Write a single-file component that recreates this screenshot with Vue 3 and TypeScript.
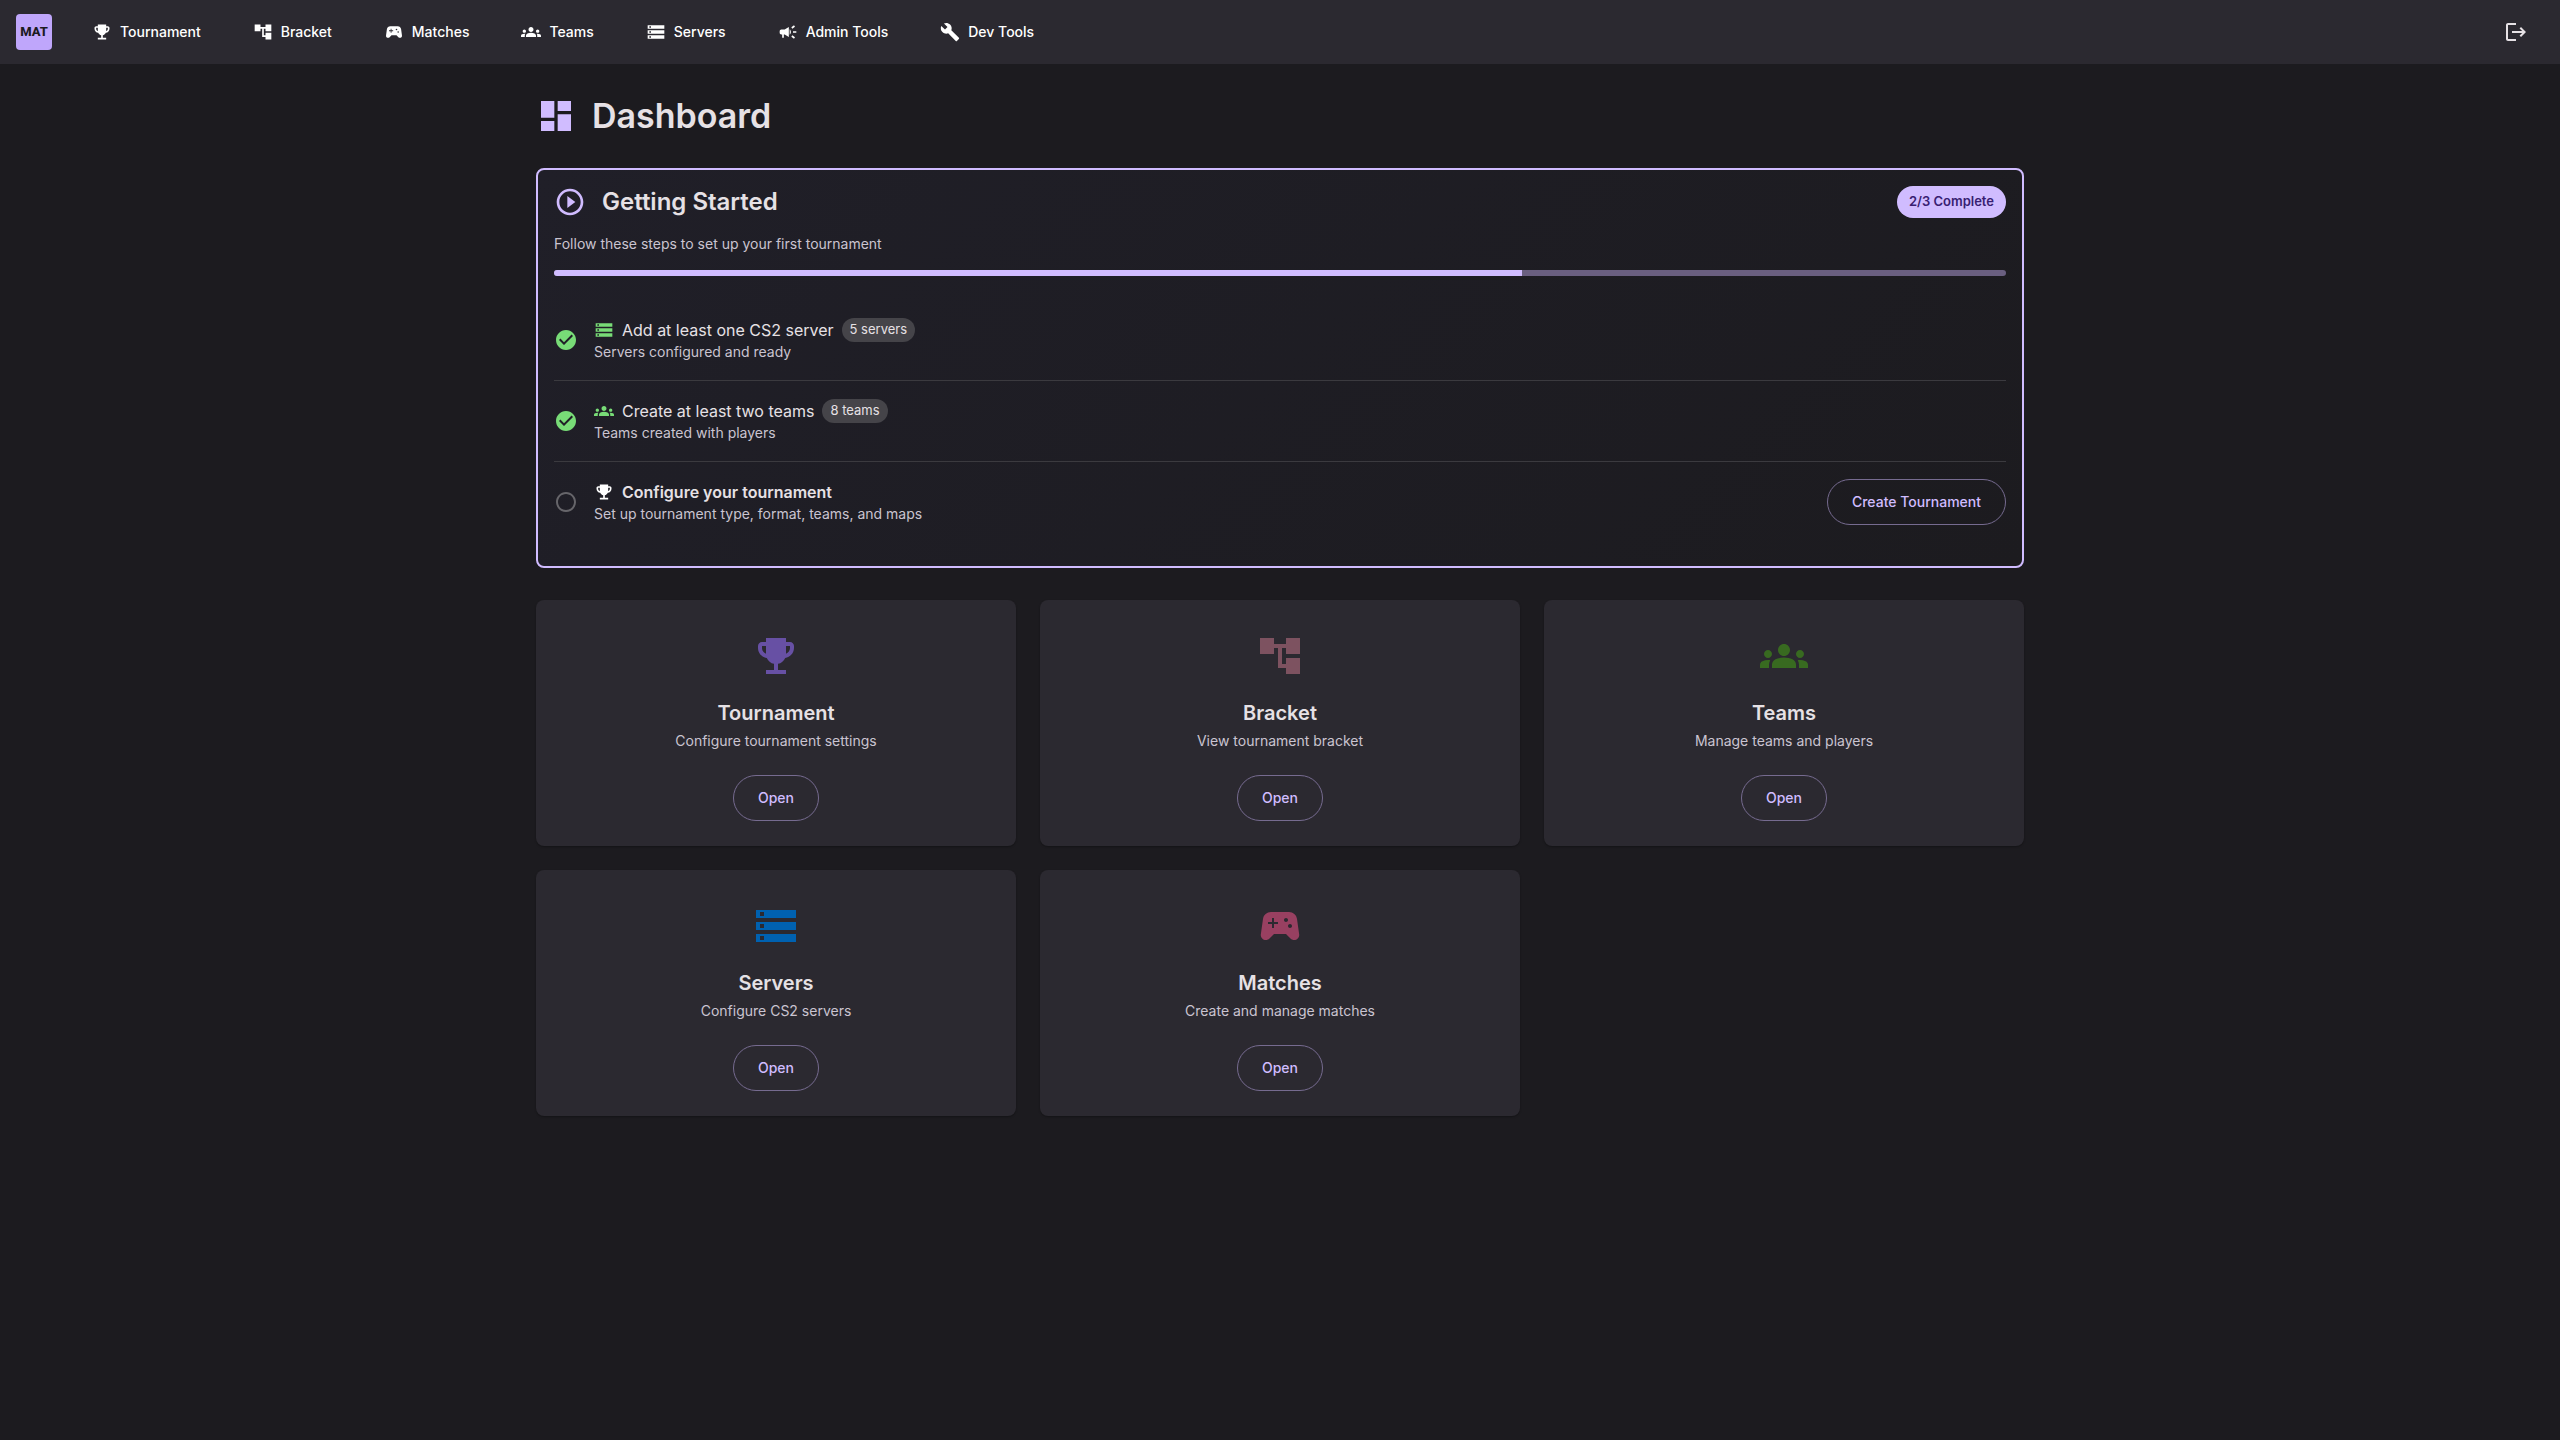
<script setup lang="ts">
interface NavItem {
  label: string
  icon: string
}

interface Step {
  title: string
  detail: string
  icon: string
  done: boolean
  count?: string
  action?: string
}

interface Tile {
  title: string
  detail: string
  icon: string
  color: string
}

const icons: Record<string, string> = {
  trophy:
    'M19 5h-2V3H7v2H5c-1.1 0-2 .9-2 2v1c0 2.55 1.92 4.63 4.39 4.94.63 1.5 1.98 2.63 3.61 2.96V19H7v2h10v-2h-4v-3.1c1.63-.33 2.98-1.46 3.61-2.96C19.08 12.63 21 10.55 21 8V7c0-1.1-.9-2-2-2M5 8V7h2v3.82C5.84 10.4 5 9.3 5 8m14 0c0 1.3-.84 2.4-2 2.82V7h2z',
  bracket: 'M22 11V3h-7v3H9V3H2v8h7V8h2v10h4v3h7v-8h-7v3h-2V8h2v3z',
  gamepad:
    'm21.58 16.09-1.09-7.66C20.21 6.46 18.52 5 16.53 5H7.47C5.48 5 3.79 6.46 3.51 8.43l-1.09 7.66C2.2 17.63 3.39 19 4.94 19c.68 0 1.32-.27 1.8-.75L9 16h6l2.25 2.25c.48.48 1.13.75 1.8.75 1.56 0 2.75-1.37 2.53-2.91M11 11H9v2H8v-2H6v-1h2V8h1v2h2zm4-1c-.55 0-1-.45-1-1s.45-1 1-1 1 .45 1 1-.45 1-1 1m2 3c-.55 0-1-.45-1-1s.45-1 1-1 1 .45 1 1-.45 1-1 1',
  groups:
    'M12 12.75c1.63 0 3.07.39 4.24.9 1.08.48 1.76 1.56 1.76 2.73V18H6v-1.61c0-1.18.68-2.26 1.76-2.73 1.17-.52 2.61-.91 4.24-.91M4 13c1.1 0 2-.9 2-2s-.9-2-2-2-2 .9-2 2 .9 2 2 2m1.13 1.1c-.37-.06-.74-.1-1.13-.1-.99 0-1.93.21-2.78.58C.48 14.9 0 15.62 0 16.43V18h4.5v-1.61c0-.83.23-1.61.63-2.29M20 13c1.1 0 2-.9 2-2s-.9-2-2-2-2 .9-2 2 .9 2 2 2m4 3.43c0-.81-.48-1.53-1.22-1.85-.85-.37-1.79-.58-2.78-.58-.39 0-.76.04-1.13.1.4.68.63 1.46.63 2.29V18H24zM12 6c1.66 0 3 1.34 3 3s-1.34 3-3 3-3-1.34-3-3 1.34-3 3-3',
  storage:
    'M2 20h20v-4H2zm2-3h2v2H4zM2 4v4h20V4zm4 3H4V5h2zm-4 7h20v-4H2zm2-3h2v2H4z',
  campaign:
    'M18 11v2h4v-2zm-2 6.61c.96.71 2.21 1.65 3.2 2.39.4-.53.8-1.07 1.2-1.6-.99-.74-2.24-1.68-3.2-2.4-.4.54-.8 1.08-1.2 1.61M20.4 5.6c-.4-.53-.8-1.07-1.2-1.6-.99.74-2.24 1.68-3.2 2.4.4.53.8 1.07 1.2 1.6.96-.72 2.21-1.65 3.2-2.4M4 9c-1.1 0-2 .9-2 2v2c0 1.1.9 2 2 2h1v4h2v-4h1l5 3V6L8 9zm11.5 3c0-1.33-.58-2.53-1.5-3.35v6.69c.92-.81 1.5-2.01 1.5-3.34',
  wrench:
    'm22.7 19-9.1-9.1c.9-2.3.4-5-1.5-6.9-2-2-5-2.4-7.4-1.3L9 6 6 9 1.6 4.7C.4 7.1.9 10.1 2.9 12.1c1.9 1.9 4.6 2.4 6.9 1.5l9.1 9.1c.4.4 1 .4 1.4 0l2.3-2.3c.5-.4.5-1.1.1-1.4',
  logout:
    'm17 7-1.41 1.41L18.17 11H8v2h10.17l-2.58 2.58L17 17l5-5zM4 5h8V3H4c-1.1 0-2 .9-2 2v14c0 1.1.9 2 2 2h8v-2H4z',
  dashboard: 'M3 13h8V3H3zm0 8h8v-6H3zm10 0h8V11h-8zm0-18v6h8V3z',
  play: 'm10 16.5 6-4.5-6-4.5zM12 2C6.48 2 2 6.48 2 12s4.48 10 10 10 10-4.48 10-10S17.52 2 12 2m0 18c-4.41 0-8-3.59-8-8s3.59-8 8-8 8 3.59 8 8-3.59 8-8 8',
  check:
    'M12 2C6.48 2 2 6.48 2 12s4.48 10 10 10 10-4.48 10-10S17.52 2 12 2m-2 15-5-5 1.41-1.41L10 14.17l7.59-7.59L19 8z',
  circle:
    'M12 2C6.48 2 2 6.48 2 12s4.48 10 10 10 10-4.48 10-10S17.52 2 12 2m0 18c-4.42 0-8-3.58-8-8s3.58-8 8-8 8 3.58 8 8-3.58 8-8 8',
}

const navItems: NavItem[] = [
  { label: 'Tournament', icon: 'trophy' },
  { label: 'Bracket', icon: 'bracket' },
  { label: 'Matches', icon: 'gamepad' },
  { label: 'Teams', icon: 'groups' },
  { label: 'Servers', icon: 'storage' },
  { label: 'Admin Tools', icon: 'campaign' },
  { label: 'Dev Tools', icon: 'wrench' },
]

const steps: Step[] = [
  {
    title: 'Add at least one CS2 server',
    detail: 'Servers configured and ready',
    icon: 'storage',
    done: true,
    count: '5 servers',
  },
  {
    title: 'Create at least two teams',
    detail: 'Teams created with players',
    icon: 'groups',
    done: true,
    count: '8 teams',
  },
  {
    title: 'Configure your tournament',
    detail: 'Set up tournament type, format, teams, and maps',
    icon: 'trophy',
    done: false,
    action: 'Create Tournament',
  },
]

const tiles: Tile[] = [
  { title: 'Tournament', detail: 'Configure tournament settings', icon: 'trophy', color: '#6750a4' },
  { title: 'Bracket', detail: 'View tournament bracket', icon: 'bracket', color: '#7d5260' },
  { title: 'Teams', detail: 'Manage teams and players', icon: 'groups', color: '#386a20' },
  { title: 'Servers', detail: 'Configure CS2 servers', icon: 'storage', color: '#0061b0' },
  { title: 'Matches', detail: 'Create and manage matches', icon: 'gamepad', color: '#984061' },
]

const completed = steps.filter((s) => s.done).length
</script>

<template>
  <header class="app-bar">
    <a class="logo" href="#" aria-label="Home">MAT</a>
    <nav class="nav">
      <a v-for="item in navItems" :key="item.label" class="nav-link" href="#">
        <svg class="icon-20" viewBox="0 0 24 24" aria-hidden="true"><path :d="icons[item.icon]" /></svg>
        {{ item.label }}
      </a>
    </nav>
    <button class="logout" type="button" aria-label="Sign out">
      <svg class="icon-24" viewBox="0 0 24 24" aria-hidden="true"><path :d="icons.logout" /></svg>
    </button>
  </header>

  <main class="container">
    <div class="page-title">
      <svg class="icon-40" viewBox="0 0 24 24" aria-hidden="true"><path :d="icons.dashboard" /></svg>
      <h1>Dashboard</h1>
    </div>

    <section class="started">
      <div class="started-head">
        <svg class="icon-32" viewBox="0 0 24 24" aria-hidden="true"><path :d="icons.play" /></svg>
        <h2>Getting Started</h2>
        <span class="status">{{ completed }}/{{ steps.length }} Complete</span>
      </div>
      <p class="intro">Follow these steps to set up your first tournament</p>
      <progress class="progress" :value="completed" :max="steps.length" aria-label="Setup progress"></progress>
      <ul class="steps">
        <li v-for="step in steps" :key="step.title" class="step">
          <svg class="icon-24" :class="step.done ? 'done' : 'pending'" viewBox="0 0 24 24" aria-hidden="true">
            <path :d="step.done ? icons.check : icons.circle" />
          </svg>
          <div class="step-body">
            <div class="step-title">
              <svg class="icon-20" :class="{ done: step.done }" viewBox="0 0 24 24" aria-hidden="true">
                <path :d="icons[step.icon]" />
              </svg>
              <span :class="{ current: !step.done }">{{ step.title }}</span>
              <span v-if="step.count" class="count">{{ step.count }}</span>
            </div>
            <p class="step-detail">{{ step.detail }}</p>
          </div>
          <button v-if="step.action" class="outlined" type="button">{{ step.action }}</button>
        </li>
      </ul>
    </section>

    <div class="tiles">
      <article v-for="tile in tiles" :key="tile.title" class="tile">
        <svg class="icon-48" viewBox="0 0 24 24" :style="{ fill: tile.color }" aria-hidden="true">
          <path :d="icons[tile.icon]" />
        </svg>
        <h3>{{ tile.title }}</h3>
        <p>{{ tile.detail }}</p>
        <button class="outlined" type="button">Open</button>
      </article>
    </div>
  </main>
</template>

<style>
body {
  background: #1c1b1f;
}

#app {
  color: #e6e1e5;
  font-family: Inter, Roboto, "Liberation Sans", sans-serif;
  font-size: 14px;
  line-height: 20px;
}
</style>

<style scoped>
*,
*::before,
*::after {
  box-sizing: border-box;
}

h1,
h2,
h3,
p,
ul {
  margin: 0;
  padding: 0;
}

svg {
  display: block;
  flex: none;
  fill: currentColor;
}

.icon-20 {
  width: 20px;
  height: 20px;
}

.icon-24 {
  width: 24px;
  height: 24px;
}

.icon-32 {
  width: 32px;
  height: 32px;
  fill: #d0bcff;
}

.icon-40 {
  width: 40px;
  height: 40px;
  fill: #d0bcff;
}

.icon-48 {
  width: 48px;
  height: 48px;
}

.app-bar {
  display: flex;
  align-items: center;
  height: 64px;
  padding: 0 24px 0 16px;
  background: #2b2930;
}

.logo {
  display: flex;
  align-items: center;
  justify-content: center;
  width: 36px;
  height: 36px;
  border-radius: 4px;
  background: #bfa6fb;
  color: #1c1b1f;
  font-family: Roboto, Inter, sans-serif;
  font-size: 13px;
  font-weight: 800;
  text-decoration: none;
}

.nav {
  display: flex;
  flex: 1;
  gap: 8px;
  margin-left: 20px;
}

.nav-link {
  display: flex;
  align-items: center;
  gap: 8px;
  padding: 10px 24px 10px 20px;
  color: #fff;
  font-weight: 500;
  text-decoration: none;
}

.logout {
  padding: 8px;
  border: 0;
  background: none;
  color: #e6e1e5;
}

.container {
  max-width: 1536px;
  margin: 0 auto;
  padding: 32px 24px;
}

.page-title {
  display: flex;
  align-items: center;
  gap: 16px;
  margin-bottom: 32px;
}

h1 {
  font-size: 34px;
  font-weight: 600;
  line-height: 40px;
}

.started {
  margin-bottom: 32px;
  padding: 16px 16px 24px;
  border: 2px solid #d0bcff;
  border-radius: 8px;
  background: linear-gradient(135deg, #201f28 0%, #1c1b1f 100%);
}

.started-head {
  display: flex;
  align-items: center;
  gap: 16px;
  margin-bottom: 16px;
}

h2 {
  flex: 1;
  font-size: 24px;
  font-weight: 600;
  line-height: 32px;
}

.status {
  padding: 0 12px 2px;
  border-radius: 16px;
  background: #d0bcff;
  color: #381e72;
  font-size: 13px;
  font-weight: 600;
  line-height: 30px;
}

.intro,
.step-detail,
.tile p {
  color: #cac4d0;
}

.progress {
  display: block;
  width: 100%;
  height: 6px;
  margin: 16px 0 24px;
  border: 0;
  border-radius: 4px;
  overflow: hidden;
  appearance: none;
}

.progress::-webkit-progress-bar {
  background: #6a5f80;
}

.progress::-webkit-progress-value {
  background: #d0bcff;
}

.steps {
  list-style: none;
}

.step {
  display: flex;
  align-items: center;
  gap: 16px;
  min-height: 80px;
}

.step + .step {
  min-height: 81px;
  border-top: 1px solid #3b3a3f;
}

.step-body {
  flex: 1;
}

.step-title {
  display: flex;
  align-items: center;
  gap: 8px;
  color: #e6e1e5;
  font-size: 16px;
  line-height: 24px;
}

.step-title svg {
  fill: #fff;
}

.step svg.done {
  fill: #78dc77;
}

.pending {
  fill: #66656a;
}

.current {
  font-weight: 600;
}

.count {
  padding: 0 8px 2px;
  border-radius: 12px;
  background: #454449;
  font-size: 13px;
  line-height: 22px;
}

.outlined {
  height: 46px;
  padding: 0 24px 2px;
  border: 1px solid #766b90;
  border-radius: 24px;
  background: none;
  color: #d0bcff;
  font-family: inherit;
  font-size: 14px;
  font-weight: 500;
}

.tiles {
  display: grid;
  grid-template-columns: repeat(3, 1fr);
  grid-auto-rows: minmax(246px, auto);
  gap: 24px;
}

.tile {
  display: flex;
  flex-direction: column;
  align-items: center;
  padding: 32px 24px 24px;
  border-radius: 8px;
  background: #2b2930;
  box-shadow: 0 1px 2px rgba(0, 0, 0, 0.3);
  text-align: center;
}

h3 {
  margin: 16px 0 1px;
  font-size: 20px;
  font-weight: 600;
  line-height: 34px;
}

.tile .outlined {
  margin-top: 24px;
}
</style>
